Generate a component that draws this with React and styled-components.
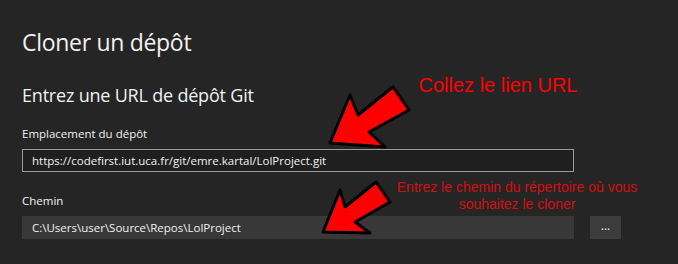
import React from "react";
import styled, { createGlobalStyle } from "styled-components";

const GlobalStyle = createGlobalStyle`
  html, body {
    margin: 0;
    padding: 0;
    background: #252526;
  }
  body {
    font-family: "Segoe UI", "Open Sans", "Noto Sans", sans-serif;
  }
`;

const Page = styled.div`
  position: relative;
  width: 678px;
  height: 264px;
  overflow: hidden;
  background: #252526;
  box-sizing: border-box;
  padding: 26px 22px 0 22px;
  display: flex;
  flex-direction: column;
  color: #f1f1f1;
`;

const Title = styled.h1`
  margin: 0;
  font-size: 23px;
  font-weight: 400;
  line-height: 32px;
  letter-spacing: -0.3px;
`;

const Subtitle = styled.h2`
  margin: 25px 0 0 0;
  font-size: 18px;
  font-weight: 400;
  line-height: 24px;
  letter-spacing: -0.2px;
`;

const Field = styled.div`
  display: flex;
  flex-direction: column;
  margin-top: ${(p) => p.$top}px;
`;

const Label = styled.label`
  font-size: 11.5px;
  line-height: 16px;
  color: #f1f1f1;
  margin-bottom: 7px;
`;

const Row = styled.div`
  display: flex;
  align-items: stretch;
  gap: 16px;
`;

const Input = styled.div`
  width: 552px;
  height: 23px;
  box-sizing: border-box;
  display: flex;
  align-items: center;
  padding: 0 9px;
  font-size: 11.5px;
  color: #f1f1f1;
  background: ${(p) => (p.$focused ? "#1f1f1f" : "#383838")};
  border: 1px solid ${(p) => (p.$focused ? "#9b9b9b" : "#383838")};
`;

const BrowseButton = styled.button`
  width: 31px;
  height: 23px;
  border: none;
  background: #3c3c3c;
  color: #f1f1f1;
  font-family: inherit;
  font-size: 12px;
  line-height: 1;
  padding: 0 0 4px 0;
  cursor: pointer;
`;

const Overlay = styled.svg`
  position: absolute;
  left: 0;
  top: 0;
  pointer-events: none;
`;

const Note = styled.div`
  position: absolute;
  left: ${(p) => p.$x}px;
  top: ${(p) => p.$y}px;
  width: ${(p) => p.$w}px;
  font-family: "Liberation Sans", Arial, sans-serif;
  font-size: ${(p) => p.$size}px;
  line-height: ${(p) => p.$lh}px;
  color: ${(p) => p.$color};
  text-align: center;
  white-space: nowrap;
`;

export default function App() {
  return (
    <>
      <GlobalStyle />
      <Page>
        <Title>Cloner un dépôt</Title>
        <Subtitle>Entrez une URL de dépôt Git</Subtitle>
        <Field $top={19}>
          <Label>Emplacement du dépôt</Label>
          <Row>
            <Input $focused>
              https://codefirst.iut.uca.fr/git/emre.kartal/LolProject.git
            </Input>
          </Row>
        </Field>
        <Field $top={21}>
          <Label>Chemin</Label>
          <Row>
            <Input>C:\Users\user\Source\Repos\LolProject</Input>
            <BrowseButton>...</BrowseButton>
          </Row>
        </Field>

        <Overlay width="678" height="264" viewBox="0 0 678 264">
          <polygon
            points="330,143 350,95 358,115 393,87 409,110 369,132 385,147"
            fill="#ff0000"
            stroke="#000"
            strokeWidth="3"
            strokeLinejoin="round"
          />
          <polygon
            points="323,232 340,190 345,207 376,182 390,202 355,222 370,233"
            fill="#ff0000"
            stroke="#000"
            strokeWidth="3"
            strokeLinejoin="round"
          />
        </Overlay>
        <Note $x={403} $y={73} $w={190} $size={20} $lh={24} $color="#ff0000">
          Collez le lien URL
        </Note>
        <Note $x={377} $y={179} $w={280} $size={14} $lh={17} $color="#d40f0f">
          Entrez le chemin du répertoire où vous
          <br />
          souhaitez le cloner
        </Note>
      </Page>
    </>
  );
}
